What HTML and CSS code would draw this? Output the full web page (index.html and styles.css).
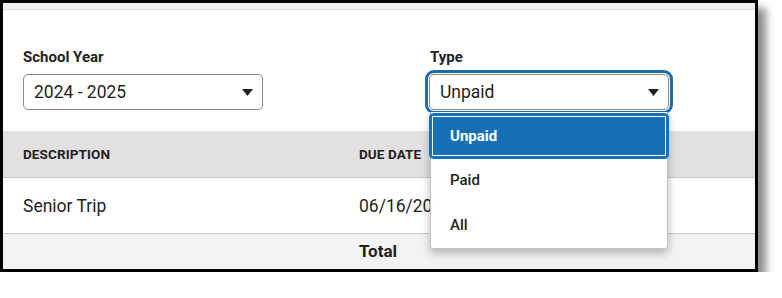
FILE: index.html
```html
<!DOCTYPE html>
<html>
<head>
<meta charset="utf-8">
<link rel="stylesheet" href="styles.css">
</head>
<body>
<div class="frame">
  <div class="topstrip"></div>
  <div class="filters">
    <div class="field">
      <div class="label">School Year</div>
      <div class="select">
        <span>2024 - 2025</span>
        <svg class="arrow" width="11" height="7" viewBox="0 0 11 7"><path d="M0 0H11L5.5 7Z" fill="#222"/></svg>
      </div>
    </div>
    <div class="field type">
      <div class="label">Type</div>
      <div class="select focused">
        <span>Unpaid</span>
        <svg class="arrow" width="11" height="7" viewBox="0 0 11 7"><path d="M0 0H11L5.5 7Z" fill="#222"/></svg>
      </div>
      <ul class="menu">
        <li class="opt sel">Unpaid</li>
        <li class="opt">Paid</li>
        <li class="opt">All</li>
      </ul>
    </div>
  </div>
  <div class="table">
    <div class="row head">
      <div>DESCRIPTION</div>
      <div>DUE DATE</div>
    </div>
    <div class="row body">
      <div>Senior Trip</div>
      <div>06/16/2025</div>
    </div>
    <div class="row total">
      <div></div>
      <div>Total</div>
    </div>
  </div>
</div>
</body>
</html>
```
FILE: styles.css
```css
* { box-sizing: border-box; }
html, body { margin: 0; padding: 0; background: #fff; }
body { font-family: Roboto, "Noto Sans", sans-serif; color: #1f1f1f; }

.frame {
  width: 758px;
  height: 272px;
  border: 3px solid #000;
  box-shadow: 8px 8px 8px rgba(0, 0, 0, 0.45);
  background: #fff;
  overflow: hidden;
}

.topstrip {
  height: 7px;
  background: #eeeeee;
  border-bottom: 1px solid #dcdcdc;
}

.filters {
  display: grid;
  grid-template-columns: 406px 240px;
  padding: 38px 0 21px 20px;
}

.field { position: relative; width: 240px; }

.label {
  font-size: 15px;
  font-weight: 700;
  line-height: 18px;
  margin-bottom: 8px;
  color: #222;
}
.type .label { padding-left: 1px; }

.select {
  height: 36px;
  border: 1px solid #8a8a8a;
  border-radius: 5px;
  display: flex;
  align-items: center;
  justify-content: space-between;
  padding: 0 9px 0 10px;
  font-size: 17.5px;
  color: #1f1f1f;
}
.select.focused {
  outline: 3px solid #1a6db3;
  outline-offset: 1px;
}
.arrow { display: block; margin-top: 1px; }

.menu {
  position: absolute;
  left: 1px;
  top: 64px;
  width: 238px;
  margin: 0;
  padding: 0;
  list-style: none;
  background: #fff;
  border: 1px solid #c4c4c4;
  border-top: none;
  border-radius: 0 0 3px 3px;
  box-shadow: 0 4px 10px rgba(0, 0, 0, 0.28);
  z-index: 2;
}
.opt {
  height: 45px;
  line-height: 45px;
  padding-left: 19px;
  font-size: 15px;
  font-weight: 500;
  color: #222;
}
.opt.sel {
  height: 44px;
  margin: 2px -1px 0 -1px;
  padding-left: 20px;
  background: #1670b8;
  color: #fff;
  font-weight: 700;
  border-radius: 3px;
  box-shadow: inset 0 0 0 2px #1670b8, inset 0 0 0 3px #fff;
  outline: 1px solid #1670b8;
}

.row {
  display: grid;
  grid-template-columns: 336px 1fr;
  padding-left: 20px;
  align-items: center;
}
.row.head {
  height: 47px;
  background: #e1e1e1;
  border-bottom: 1px solid #c8c8c8;
  font-size: 13.5px;
  font-weight: 700;
  letter-spacing: 0.1px;
  color: #222;
}
.row.body {
  height: 56px;
  background: #fff;
  border-bottom: 1px solid #c8c8c8;
  font-size: 17.5px;
}
.row.total {
  height: 46px;
  align-items: start;
  padding-top: 7px;
  line-height: 20px;
  background: #f3f3f3;
  font-size: 17px;
  font-weight: 700;
}
```
